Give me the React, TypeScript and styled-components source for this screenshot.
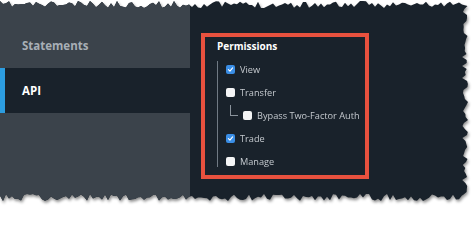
import React, { FC } from 'react';
import styled, { createGlobalStyle } from 'styled-components';

const GlobalStyle = createGlobalStyle`
  html, body {
    margin: 0;
    padding: 0;
    background: #ffffff;
  }
  body {
    font-family: 'Open Sans', 'Noto Sans', 'DejaVu Sans', sans-serif;
  }
`;

// torn paper edge, made once from a seeded random walk
const tornEdge = (() => {
  let seed = 11;
  const rnd = () => {
    seed = (seed * 16807) % 2147483647;
    return seed / 2147483647;
  };
  const pts: string[] = [];
  for (let x = 0; x <= 462; x += 3) pts.push(`${x}px ${(1 + rnd() * 7).toFixed(1)}px`);
  for (let y = 6; y <= 196; y += 3) pts.push(`${(462 + rnd() * 6).toFixed(1)}px ${y}px`);
  for (let x = 462; x >= 0; x -= 3) pts.push(`${x}px ${(194 + rnd() * 7).toFixed(1)}px`);
  return `polygon(${pts.join(', ')})`;
})();

const Shadow = styled.div`
  width: 474px;
  height: 212px;
  filter: drop-shadow(1px 2px 1.5px rgba(0, 0, 0, 0.45));
`;

const Screen = styled.div`
  width: 470px;
  height: 203px;
  display: flex;
  clip-path: ${tornEdge};
  background: #19222b;
`;

const Sidebar = styled.nav`
  width: 190px;
  background: #3b434b;
  display: flex;
  flex-direction: column;
  padding-top: 23px;
`;

const NavItem = styled.div<{ $active?: boolean }>`
  height: 45px;
  display: flex;
  align-items: center;
  padding-left: 22px;
  font-size: 11.5px;
  font-weight: 700;
  color: ${(p) => (p.$active ? '#ffffff' : '#a8afb6')};
  background: ${(p) => (p.$active ? '#19222b' : 'transparent')};
  box-shadow: ${(p) => (p.$active ? 'inset 5px 0 0 #2c9de0' : 'none')};
`;

const Main = styled.main`
  flex: 1;
  padding: 33px 0 0 11px;
`;

const Highlight = styled.section`
  width: 148px;
  height: 136px;
  border: 4px solid #e8513e;
  padding: 2px 0 0 12px;
  box-sizing: content-box;
`;

const Title = styled.div`
  font-size: 10px;
  font-weight: 700;
  color: #ffffff;
  line-height: 15px;
`;

const Tree = styled.div`
  position: relative;
  margin-top: 4px;
  padding-left: 9px;
  display: flex;
  flex-direction: column;

  &::before {
    content: '';
    position: absolute;
    left: 0;
    top: 3px;
    bottom: 6px;
    width: 1px;
    background: #707a84;
  }
`;

const Row = styled.label<{ $nested?: boolean }>`
  height: 23px;
  display: flex;
  align-items: center;
  gap: 5px;
  padding-left: ${(p) => (p.$nested ? '17px' : '0')};
  position: relative;
  font-size: 9.2px;
  color: #c4c9ce;
  white-space: nowrap;
`;

const Elbow = styled.span`
  position: absolute;
  left: 4px;
  top: 1px;
  width: 7px;
  height: 10px;
  border-left: 1px solid #8a939c;
  border-bottom: 1px solid #8a939c;
`;

const Box = styled.span<{ $checked?: boolean }>`
  width: 9px;
  height: 9px;
  border-radius: 2px;
  background: ${(p) => (p.$checked ? '#3a8ee6' : '#f4f5f6')};
  display: flex;
  align-items: center;
  justify-content: center;
  flex-shrink: 0;
`;

const Check: FC = () => (
  <svg width="7" height="7" viewBox="0 0 10 10">
    <path d="M2 5.3 L4.2 7.4 L8 2.8" fill="none" stroke="#ffffff" strokeWidth="1.6" strokeLinecap="round" strokeLinejoin="round" />
  </svg>
);

interface IPermission {
  label: string;
  checked: boolean;
  nested?: boolean;
}

const permissions: IPermission[] = [
  { label: 'View', checked: true },
  { label: 'Transfer', checked: false },
  { label: 'Bypass Two-Factor Auth', checked: false, nested: true },
  { label: 'Trade', checked: true },
  { label: 'Manage', checked: false },
];

const App: FC = () => (
  <>
    <GlobalStyle />
    <Shadow>
      <Screen>
        <Sidebar>
          <NavItem>Statements</NavItem>
          <NavItem $active>API</NavItem>
        </Sidebar>
        <Main>
          <Highlight>
            <Title>Permissions</Title>
            <Tree>
              {permissions.map((perm) => (
                <Row key={perm.label} $nested={perm.nested}>
                  {perm.nested && <Elbow />}
                  <Box $checked={perm.checked}>{perm.checked && <Check />}</Box>
                  {perm.label}
                </Row>
              ))}
            </Tree>
          </Highlight>
        </Main>
      </Screen>
    </Shadow>
  </>
);

export default App;
